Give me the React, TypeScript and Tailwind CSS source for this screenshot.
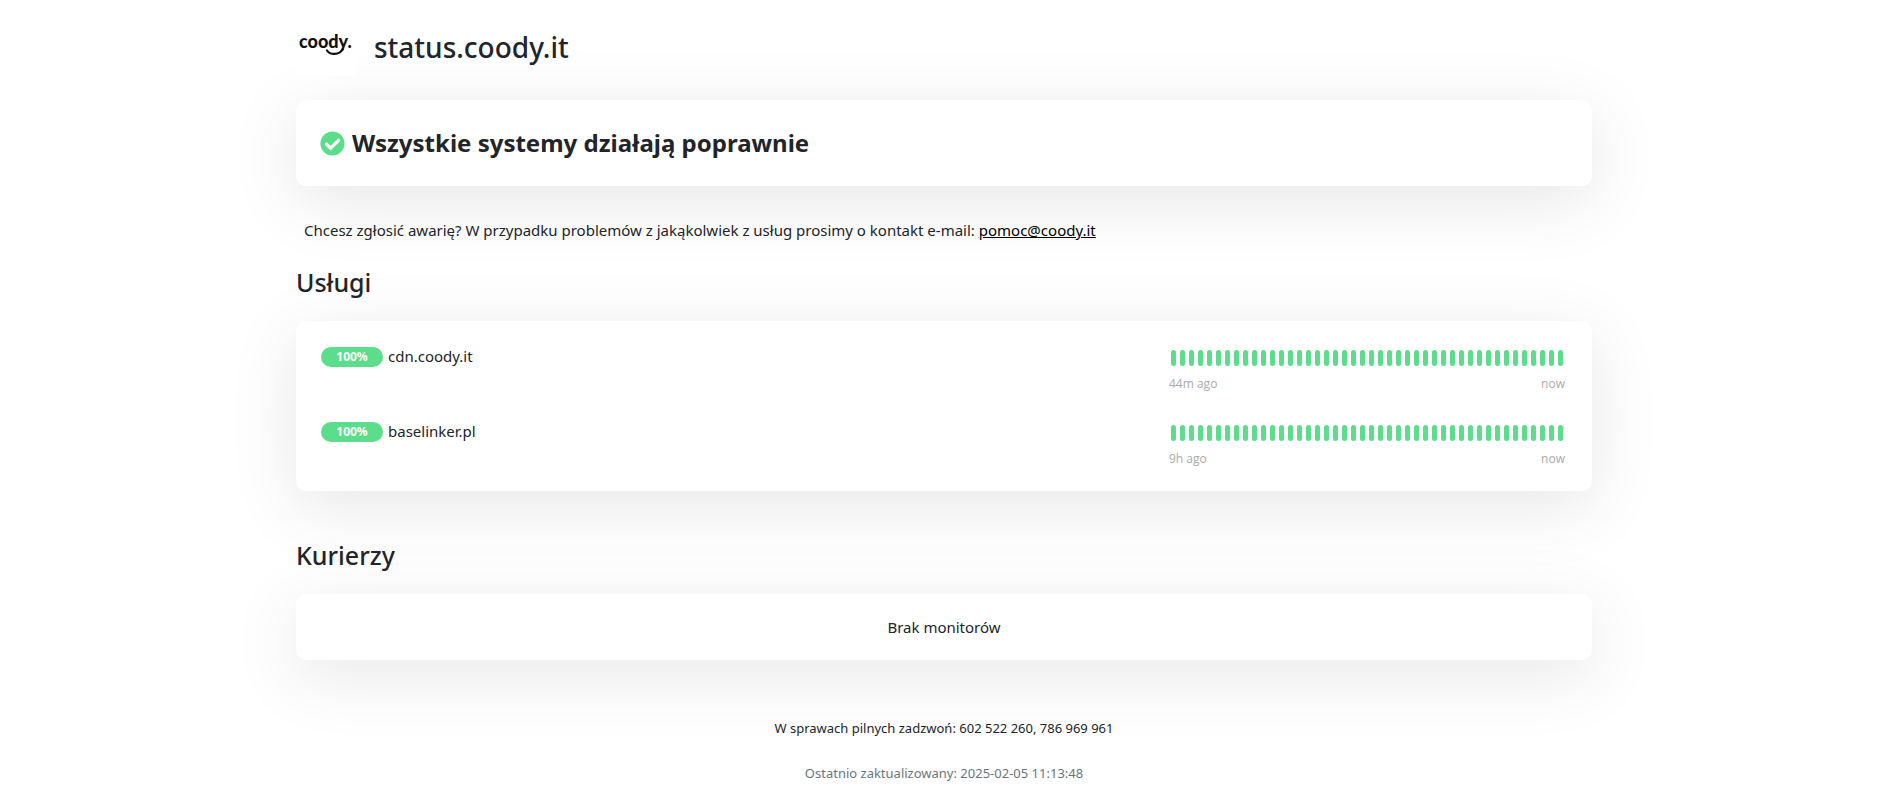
import type { ReactNode } from "react";

type Monitor = { name: string; uptime: string; since: string };

const monitors: Monitor[] = [
  { name: "cdn.coody.it", uptime: "100%", since: "44m ago" },
  { name: "baselinker.pl", uptime: "100%", since: "9h ago" },
];

const BEATS = 44;

function Card({ className, children }: { className: string; children: ReactNode }) {
  return (
    <div className={`rounded-[10px] bg-white shadow-[0_15px_70px_rgba(0,0,0,0.1)] ${className}`}>
      {children}
    </div>
  );
}

function Logo() {
  return (
    <svg viewBox="0 0 60 60" className="z-10 size-15 shrink-0 bg-white" role="img" aria-label="coody.">
      <text x="3" y="32" fontFamily="Lato" fontWeight="900" fontSize="18" fill="#111">
        coody.
      </text>
      <path d="M31 34.500C34 39 43 39.500 47 33" fill="none" stroke="#111" strokeWidth="2.200" strokeLinecap="round" />
    </svg>
  );
}

function CheckCircle() {
  return (
    <svg viewBox="0 0 512 512" className="size-[25px] shrink-0" aria-hidden="true">
      <path
        fill="#5cdd8b"
        d="M504 256c0 136.967-111.033 248-248 248S8 392.967 8 256 119.033 8 256 8s248 111.033 248 248zM227.314 387.314l184-184c6.248-6.248 6.248-16.379 0-22.627l-22.627-22.627c-6.248-6.249-16.379-6.249-22.628 0L216 308.118l-70.059-70.059c-6.248-6.248-16.379-6.248-22.628 0l-22.627 22.627c-6.248 6.248-6.248 16.379 0 22.627l104 104c6.249 6.249 16.379 6.249 22.628.001z"
      />
    </svg>
  );
}

function MonitorRow({ monitor }: { monitor: Monitor }) {
  return (
    <li className="flex items-start justify-between">
      <div className="flex items-start gap-[5px]">
        <span className="w-[62px] rounded-full bg-[#5cdd8b] text-center text-xs leading-5 font-bold text-white">
          {monitor.uptime}
        </span>
        <span className="text-[15px] leading-[18px]">{monitor.name}</span>
      </div>
      <div className="pt-[3px]">
        <div className="flex gap-1 px-0.5">
          {Array.from({ length: BEATS }, (_, i) => (
            <span key={i} className="h-4 w-[5px] rounded-full bg-[#5cdd8b]" />
          ))}
        </div>
        <div className="mt-2 flex justify-between font-['Open_Sans',sans-serif] text-xs leading-5 text-[#aaaaaa]">
          <span>{monitor.since}</span>
          <span>now</span>
        </div>
      </div>
    </li>
  );
}

export default function App() {
  return (
    <div className="bg-white font-['Noto_Sans',sans-serif] text-[#212529]">
      <main className="mx-auto max-w-[1320px] px-3 pt-4">
        <h1 className="flex items-center gap-[18px] text-[28px] leading-8 font-medium">
          <Logo />
          <span className="pt-0.5">status.coody.it</span>
        </h1>

        <Card className="mt-6 flex items-center gap-[7px] px-6 py-[23px]">
          <CheckCircle />
          <h2 className="text-2xl leading-10 font-bold">Wszystkie systemy działają poprawnie</h2>
        </Card>

        <p className="mt-8 px-2 text-[15px] leading-6">
          Chcesz zgłosić awarię? W przypadku problemów z jakąkolwiek z usług prosimy o kontakt e-mail:{" "}
          <a href="mailto:pomoc@coody.it" className="text-black underline">
            pomoc@coody.it
          </a>
        </p>

        <section>
          <h2 className="mt-6 text-[25px] leading-8 font-medium">Usługi</h2>
          <Card className="mt-[23px] px-[25px] pt-[26px] pb-[22px]">
            <ul className="space-y-7 pr-0.5">
              {monitors.map((monitor) => (
                <MonitorRow key={monitor.name} monitor={monitor} />
              ))}
            </ul>
          </Card>
        </section>

        <section>
          <h2 className="mt-12 text-[25px] leading-8 font-medium">Kurierzy</h2>
          <Card className="mt-[23px] px-6 py-[21px] text-center text-[15px] leading-6">Brak monitorów</Card>
        </section>

        <footer className="mt-14 pb-1 text-center text-[13px] leading-6">
          <p>W sprawach pilnych zadzwoń: 602 522 260, 786 969 961</p>
          <p className="mt-[21px] text-[#6c757d]">Ostatnio zaktualizowany: 2025-02-05 11:13:48</p>
        </footer>
      </main>
    </div>
  );
}
